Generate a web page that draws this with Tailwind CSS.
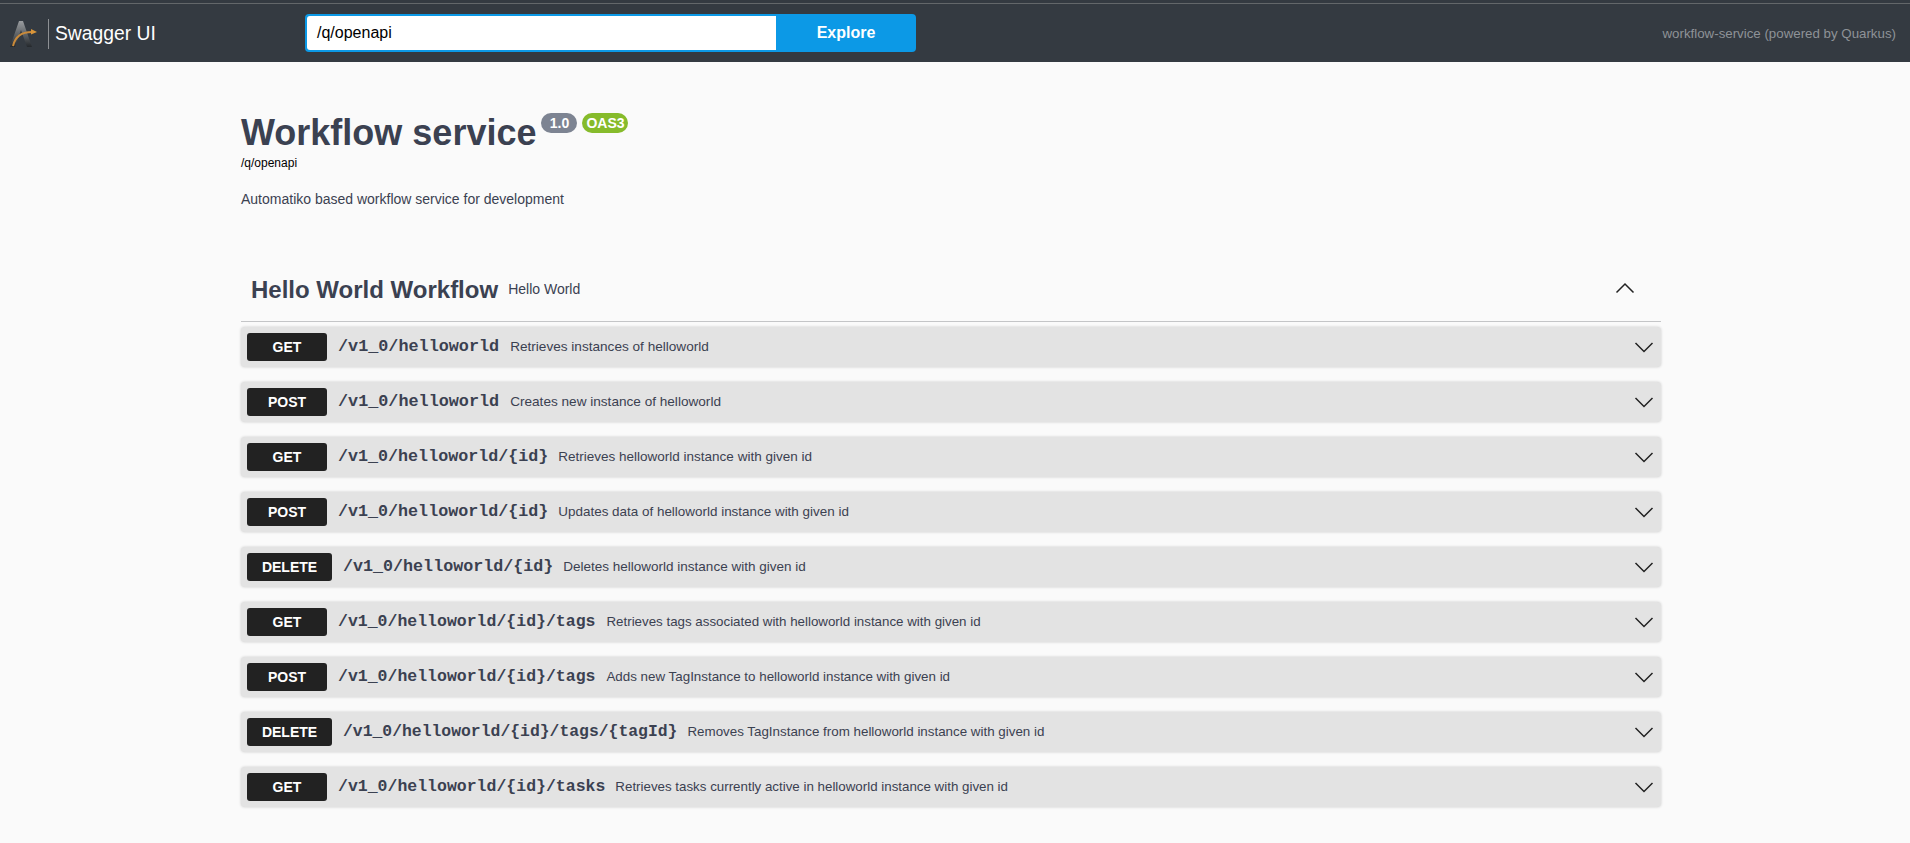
<!DOCTYPE html>
<html>
<head>
<meta charset="utf-8">
<script src="https://cdn.jsdelivr.net/npm/@tailwindcss/browser@4"></script>
</head>
<body class="bg-[#fafafa] font-['Liberation_Sans',sans-serif] text-[#3b4151] overflow-hidden">
<div class="h-[843px] flex flex-col">
  <header class="h-[62px] shrink-0 bg-[#343a41] border-t-[1px] border-[#343a41] relative flex items-center pt-[4px]">
    <div class="absolute left-0 right-0 top-[2px] h-px bg-[#63676a]"></div>
    <div class="w-[305px] shrink-0 flex items-center h-full">
      <svg class="ml-[9px] w-[30px] h-[30px]" viewBox="0 0 30 30" fill="none">
        <defs><linearGradient id="g" x1="0" y1="0" x2="0" y2="1"><stop offset="0" stop-color="#9a9da0"/><stop offset="0.6" stop-color="#55595d"/><stop offset="1" stop-color="#24282c"/></linearGradient></defs>
        <path d="M10 2 L14 2 L23 28 L18 28 L12 11 L6 28 L1 28 Z" fill="url(#g)"/>
        <path d="M4 27 C6 18 13 13 23 13" stroke="#c98a3a" stroke-width="2" fill="none"/>
        <path d="M22 10 L28 13 L22 15.5 Z" fill="#d9953a"/>
      </svg>
      <div class="w-px h-[30px] bg-[#8d9094] ml-[9px]"></div>
      <span class="ml-[6px] text-[19.3px] text-white leading-none">Swagger UI</span>
    </div>
    <div class="flex w-[611px] h-[38px] rounded-[4px] overflow-hidden bg-[#0c99e6] -mt-[2px]">
      <div class="ml-[2px] my-[2px] w-[469px] bg-white rounded-l-[3px] flex items-center pl-[10px] text-[16px] text-black">/q/openapi</div>
      <div class="flex-1 flex items-center justify-center text-white font-bold text-[16px]">Explore</div>
    </div>
    <div class="ml-auto mr-[14px] text-[13.3px] text-[#8e9297]">workflow-service (powered by Quarkus)</div>
  </header>
  <main class="pl-[241px] w-[1661px]">
    <div class="flex items-start mt-[52px] h-[37px]">
      <h1 class="text-[36px] leading-[37px] font-bold text-[#3b4151]">Workflow service</h1>
      <span class="ml-[5px] mt-[-1px] h-[20px] w-[36px] rounded-[10px] bg-[#7d8492] text-white text-[14px] font-bold flex items-center justify-center">1.0</span>
      <span class="ml-[5px] mt-[-1px] h-[20px] w-[46px] rounded-[10px] bg-[#86bb2b] text-white text-[14px] font-bold flex items-center justify-center">OAS3</span>
    </div>
    <div class="text-[12px] leading-[14px] text-black mt-[5px]">/q/openapi</div>
    <div class="text-[14px] leading-[18px] mt-[20px]">Automatiko based workflow service for development</div>
    <div class="mt-[50px] h-[64px] flex items-center border-b border-[#c4c5c7] pl-[10px]">
      <span class="text-[24px] font-bold">Hello World Workflow</span>
      <span class="ml-[10px] text-[14px]">Hello World</span>
      <svg class="ml-auto mr-[26px] mb-[4px] w-[20px] h-[20px]" viewBox="0 0 20 20" fill="none" stroke="#222" stroke-width="1.5"><path d="M1.5 14.5 L10 6 L18.5 14.5"/></svg>
    </div>
    <div class="mt-[5px] flex flex-col gap-[15px]">
      <div class="h-[40px] rounded-[4px] bg-[#e3e3e3] shadow-[0_0_3px_rgba(0,0,0,0.19)] flex items-center pl-[6px]">
        <span class="w-[80px] h-[28px] rounded-[3px] bg-[#222] text-white font-bold text-[14px] flex items-center justify-center">GET</span>
        <span class="ml-[11px] font-['Liberation_Mono',monospace] font-bold text-[16.8px] whitespace-nowrap">/v1_0/helloworld</span>
        <span class="ml-[11px] text-[13.6px] text-[#3b4151]">Retrieves instances of helloworld</span>
        <svg class="ml-auto mr-[7px] w-[20px] h-[20px]" viewBox="0 0 20 20" fill="none" stroke="#222" stroke-width="1.5"><path d="M1.5 6 L10 14.5 L18.5 6"/></svg>
      </div>
      <div class="h-[40px] rounded-[4px] bg-[#e3e3e3] shadow-[0_0_3px_rgba(0,0,0,0.19)] flex items-center pl-[6px]">
        <span class="w-[80px] h-[28px] rounded-[3px] bg-[#222] text-white font-bold text-[14px] flex items-center justify-center">POST</span>
        <span class="ml-[11px] font-['Liberation_Mono',monospace] font-bold text-[16.8px] whitespace-nowrap">/v1_0/helloworld</span>
        <span class="ml-[11px] text-[13.6px] text-[#3b4151]">Creates new instance of helloworld</span>
        <svg class="ml-auto mr-[7px] w-[20px] h-[20px]" viewBox="0 0 20 20" fill="none" stroke="#222" stroke-width="1.5"><path d="M1.5 6 L10 14.5 L18.5 6"/></svg>
      </div>
      <div class="h-[40px] rounded-[4px] bg-[#e3e3e3] shadow-[0_0_3px_rgba(0,0,0,0.19)] flex items-center pl-[6px]">
        <span class="w-[80px] h-[28px] rounded-[3px] bg-[#222] text-white font-bold text-[14px] flex items-center justify-center">GET</span>
        <span class="ml-[11px] font-['Liberation_Mono',monospace] font-bold text-[16.7px] whitespace-nowrap">/v1_0/helloworld/{id}</span>
        <span class="ml-[10px] text-[13.5px] text-[#3b4151]">Retrieves helloworld instance with given id</span>
        <svg class="ml-auto mr-[7px] w-[20px] h-[20px]" viewBox="0 0 20 20" fill="none" stroke="#222" stroke-width="1.5"><path d="M1.5 6 L10 14.5 L18.5 6"/></svg>
      </div>
      <div class="h-[40px] rounded-[4px] bg-[#e3e3e3] shadow-[0_0_3px_rgba(0,0,0,0.19)] flex items-center pl-[6px]">
        <span class="w-[80px] h-[28px] rounded-[3px] bg-[#222] text-white font-bold text-[14px] flex items-center justify-center">POST</span>
        <span class="ml-[11px] font-['Liberation_Mono',monospace] font-bold text-[16.7px] whitespace-nowrap">/v1_0/helloworld/{id}</span>
        <span class="ml-[10px] text-[13.45px] text-[#3b4151]">Updates data of helloworld instance with given id</span>
        <svg class="ml-auto mr-[7px] w-[20px] h-[20px]" viewBox="0 0 20 20" fill="none" stroke="#222" stroke-width="1.5"><path d="M1.5 6 L10 14.5 L18.5 6"/></svg>
      </div>
      <div class="h-[40px] rounded-[4px] bg-[#e3e3e3] shadow-[0_0_3px_rgba(0,0,0,0.19)] flex items-center pl-[6px]">
        <span class="w-[85px] h-[28px] rounded-[3px] bg-[#222] text-white font-bold text-[14px] flex items-center justify-center">DELETE</span>
        <span class="ml-[11px] font-['Liberation_Mono',monospace] font-bold text-[16.7px] whitespace-nowrap">/v1_0/helloworld/{id}</span>
        <span class="ml-[10px] text-[13.5px] text-[#3b4151]">Deletes helloworld instance with given id</span>
        <svg class="ml-auto mr-[7px] w-[20px] h-[20px]" viewBox="0 0 20 20" fill="none" stroke="#222" stroke-width="1.5"><path d="M1.5 6 L10 14.5 L18.5 6"/></svg>
      </div>
      <div class="h-[40px] rounded-[4px] bg-[#e3e3e3] shadow-[0_0_3px_rgba(0,0,0,0.19)] flex items-center pl-[6px]">
        <span class="w-[80px] h-[28px] rounded-[3px] bg-[#222] text-white font-bold text-[14px] flex items-center justify-center">GET</span>
        <span class="ml-[11px] font-['Liberation_Mono',monospace] font-bold text-[16.5px] whitespace-nowrap">/v1_0/helloworld/{id}/tags</span>
        <span class="ml-[11px] text-[13.33px] text-[#3b4151]">Retrieves tags associated with helloworld instance with given id</span>
        <svg class="ml-auto mr-[7px] w-[20px] h-[20px]" viewBox="0 0 20 20" fill="none" stroke="#222" stroke-width="1.5"><path d="M1.5 6 L10 14.5 L18.5 6"/></svg>
      </div>
      <div class="h-[40px] rounded-[4px] bg-[#e3e3e3] shadow-[0_0_3px_rgba(0,0,0,0.19)] flex items-center pl-[6px]">
        <span class="w-[80px] h-[28px] rounded-[3px] bg-[#222] text-white font-bold text-[14px] flex items-center justify-center">POST</span>
        <span class="ml-[11px] font-['Liberation_Mono',monospace] font-bold text-[16.5px] whitespace-nowrap">/v1_0/helloworld/{id}/tags</span>
        <span class="ml-[11px] text-[13.36px] text-[#3b4151]">Adds new TagInstance to helloworld instance with given id</span>
        <svg class="ml-auto mr-[7px] w-[20px] h-[20px]" viewBox="0 0 20 20" fill="none" stroke="#222" stroke-width="1.5"><path d="M1.5 6 L10 14.5 L18.5 6"/></svg>
      </div>
      <div class="h-[40px] rounded-[4px] bg-[#e3e3e3] shadow-[0_0_3px_rgba(0,0,0,0.19)] flex items-center pl-[6px]">
        <span class="w-[85px] h-[28px] rounded-[3px] bg-[#222] text-white font-bold text-[14px] flex items-center justify-center">DELETE</span>
        <span class="ml-[11px] font-['Liberation_Mono',monospace] font-bold text-[16.4px] whitespace-nowrap">/v1_0/helloworld/{id}/tags/{tagId}</span>
        <span class="ml-[10px] text-[13.36px] text-[#3b4151]">Removes TagInstance from helloworld instance with given id</span>
        <svg class="ml-auto mr-[7px] w-[20px] h-[20px]" viewBox="0 0 20 20" fill="none" stroke="#222" stroke-width="1.5"><path d="M1.5 6 L10 14.5 L18.5 6"/></svg>
      </div>
      <div class="h-[40px] rounded-[4px] bg-[#e3e3e3] shadow-[0_0_3px_rgba(0,0,0,0.19)] flex items-center pl-[6px]">
        <span class="w-[80px] h-[28px] rounded-[3px] bg-[#222] text-white font-bold text-[14px] flex items-center justify-center">GET</span>
        <span class="ml-[11px] font-['Liberation_Mono',monospace] font-bold text-[16.5px] whitespace-nowrap">/v1_0/helloworld/{id}/tasks</span>
        <span class="ml-[10px] text-[13.33px] text-[#3b4151]">Retrieves tasks currently active in helloworld instance with given id</span>
        <svg class="ml-auto mr-[7px] w-[20px] h-[20px]" viewBox="0 0 20 20" fill="none" stroke="#222" stroke-width="1.5"><path d="M1.5 6 L10 14.5 L18.5 6"/></svg>
      </div>
    </div>
  </main>
</div>
</body>
</html>
